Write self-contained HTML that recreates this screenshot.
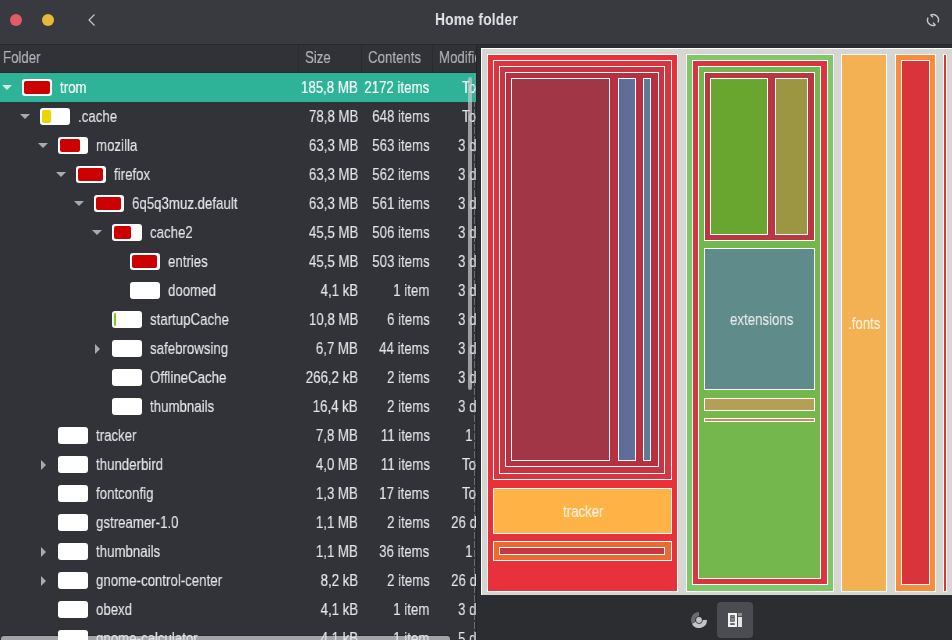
<!DOCTYPE html>
<html><head><meta charset="utf-8"><style>
html,body{margin:0;padding:0}
body{width:952px;height:640px;position:relative;overflow:hidden;background:#323338;font-family:"Liberation Sans",sans-serif}
.t{position:absolute;white-space:nowrap;line-height:1;-webkit-text-stroke:0.15px currentColor;will-change:transform}
.r{position:absolute;box-sizing:border-box;border:1px solid #fff}
</style></head><body>
<div style="position:absolute;left:0;top:0;width:952px;height:44px;background:#393a40"></div>
<div style="position:absolute;left:0;top:44px;width:952px;height:1px;background:#27282c"></div>
<div style="position:absolute;left:10px;top:14px;width:12px;height:12px;border-radius:50%;background:#e25b68"></div>
<div style="position:absolute;left:42px;top:14px;width:12px;height:12px;border-radius:50%;background:#e9b838"></div>
<svg style="position:absolute;left:86px;top:12px" width="12" height="16" viewBox="0 0 12 16"><path d="M8.5 2.5 L3 8 L8.5 13.5" fill="none" stroke="#cfcfd1" stroke-width="1.1"/></svg>
<div class="t" style="left:435.2px;top:10.6px;font-size:17px;color:#e6e6e7;transform:scaleX(0.81);transform-origin:0 0;font-weight:bold;-webkit-text-stroke:0;letter-spacing:0.3px;">Home folder</div>
<svg style="position:absolute;left:925px;top:12px" width="16" height="16" viewBox="0 0 16 16"><path d="M7.9 5.4 L5.85 2.94 A5.5 5.5 0 0 1 12.94 10.41" fill="none" stroke="#c9c9cb" stroke-width="1.4" stroke-linejoin="round"/><path d="M8.1 10.6 L10.15 13.06 A5.5 5.5 0 0 1 3.06 5.59" fill="none" stroke="#c9c9cb" stroke-width="1.4" stroke-linejoin="round"/></svg>
<div style="position:absolute;left:0;top:45px;width:476px;height:595px;background:#323338"></div>
<div style="position:absolute;left:0;top:45px;width:476px;height:27px;background:#313237"></div>
<div style="position:absolute;left:0;top:72px;width:476px;height:1px;background:#2a2b2f"></div>
<div style="position:absolute;left:298px;top:45px;width:1px;height:27px;background:#2a2b2f"></div>
<div style="position:absolute;left:361px;top:45px;width:1px;height:27px;background:#2a2b2f"></div>
<div style="position:absolute;left:432px;top:45px;width:1px;height:27px;background:#2a2b2f"></div>
<div class="t" style="left:2.5px;top:48.6px;font-size:17px;color:#b4b4b6;transform:scaleX(0.78);transform-origin:0 0;">Folder</div>
<div class="t" style="left:305px;top:48.6px;font-size:17px;color:#b4b4b6;transform:scaleX(0.78);transform-origin:0 0;">Size</div>
<div class="t" style="left:368px;top:48.6px;font-size:17px;color:#b4b4b6;transform:scaleX(0.78);transform-origin:0 0;">Contents</div>
<div class="t" style="left:439px;top:48.6px;font-size:17px;color:#b4b4b6;transform:scaleX(0.78);transform-origin:0 0;">Modified</div>
<div style="position:absolute;left:0;top:73px;width:476px;height:567px;overflow:hidden">
<div style="position:absolute;left:1px;top:562px;width:449px;height:1px;background:rgba(0,0,0,.18)"></div>
<div style="position:absolute;left:1px;top:563px;width:449px;height:6px;border-radius:3px;background:#a4a4a6"></div>
<div style="position:absolute;left:0;top:0px;width:476px;height:29px;background:#2fb398"></div>
<svg style="position:absolute;left:2px;top:12px" width="10" height="5" viewBox="0 0 10 5"><path d="M0 0 H10 L5 5 Z" fill="#cfeee6"/></svg>
<div style="position:absolute;left:22px;top:6px;width:30px;height:17px;border-radius:3px;background:#fff"></div>
<div style="position:absolute;left:24px;top:8px;width:26px;height:13px;border-radius:2px;background:#cc0000"></div>
<div class="t" style="left:59.5px;top:5.6px;font-size:17px;color:#ffffff;transform:scaleX(0.78);transform-origin:0 0;">trom</div>
<div class="t" style="right:118px;top:5.6px;font-size:17px;color:#ffffff;transform:scaleX(0.78);transform-origin:100% 0;">185,8 MB</div>
<div class="t" style="right:46.5px;top:5.6px;font-size:17px;color:#ffffff;transform:scaleX(0.78);transform-origin:100% 0;">2172 items</div>
<div style="position:absolute;left:440px;top:0px;width:36px;height:29px;overflow:hidden"><div class="t" style="right:-21.5px;top:5.6px;font-size:17px;color:#ffffff;transform:scaleX(0.78);transform-origin:100% 0;">Today</div></div>
<svg style="position:absolute;left:20px;top:41px" width="10" height="5" viewBox="0 0 10 5"><path d="M0 0 H10 L5 5 Z" fill="#a9aaad"/></svg>
<div style="position:absolute;left:40px;top:35px;width:30px;height:17px;border-radius:3px;background:#fff"></div>
<div style="position:absolute;left:42px;top:37px;width:9px;height:13px;border-radius:2px;background:#edd400"></div>
<div class="t" style="left:77.5px;top:34.6px;font-size:17px;color:#e4e4e5;transform:scaleX(0.78);transform-origin:0 0;">.cache</div>
<div class="t" style="right:118px;top:34.6px;font-size:17px;color:#e4e4e5;transform:scaleX(0.78);transform-origin:100% 0;">78,8 MB</div>
<div class="t" style="right:46.5px;top:34.6px;font-size:17px;color:#e4e4e5;transform:scaleX(0.78);transform-origin:100% 0;">648 items</div>
<div style="position:absolute;left:440px;top:29px;width:36px;height:29px;overflow:hidden"><div class="t" style="right:-21.5px;top:5.6px;font-size:17px;color:#e4e4e5;transform:scaleX(0.78);transform-origin:100% 0;">Today</div></div>
<svg style="position:absolute;left:38px;top:70px" width="10" height="5" viewBox="0 0 10 5"><path d="M0 0 H10 L5 5 Z" fill="#a9aaad"/></svg>
<div style="position:absolute;left:58px;top:64px;width:30px;height:17px;border-radius:3px;background:#fff"></div>
<div style="position:absolute;left:60px;top:66px;width:20px;height:13px;border-radius:2px;background:#cc0000"></div>
<div class="t" style="left:95.5px;top:63.6px;font-size:17px;color:#e4e4e5;transform:scaleX(0.78);transform-origin:0 0;">mozilla</div>
<div class="t" style="right:118px;top:63.6px;font-size:17px;color:#e4e4e5;transform:scaleX(0.78);transform-origin:100% 0;">63,3 MB</div>
<div class="t" style="right:46.5px;top:63.6px;font-size:17px;color:#e4e4e5;transform:scaleX(0.78);transform-origin:100% 0;">563 items</div>
<div style="position:absolute;left:440px;top:58px;width:36px;height:29px;overflow:hidden"><div class="t" style="right:-21.5px;top:5.6px;font-size:17px;color:#e4e4e5;transform:scaleX(0.78);transform-origin:100% 0;">3 days</div></div>
<svg style="position:absolute;left:56px;top:99px" width="10" height="5" viewBox="0 0 10 5"><path d="M0 0 H10 L5 5 Z" fill="#a9aaad"/></svg>
<div style="position:absolute;left:76px;top:93px;width:30px;height:17px;border-radius:3px;background:#fff"></div>
<div style="position:absolute;left:78px;top:95px;width:25px;height:13px;border-radius:2px;background:#cc0000"></div>
<div class="t" style="left:113.5px;top:92.6px;font-size:17px;color:#e4e4e5;transform:scaleX(0.78);transform-origin:0 0;">firefox</div>
<div class="t" style="right:118px;top:92.6px;font-size:17px;color:#e4e4e5;transform:scaleX(0.78);transform-origin:100% 0;">63,3 MB</div>
<div class="t" style="right:46.5px;top:92.6px;font-size:17px;color:#e4e4e5;transform:scaleX(0.78);transform-origin:100% 0;">562 items</div>
<div style="position:absolute;left:440px;top:87px;width:36px;height:29px;overflow:hidden"><div class="t" style="right:-21.5px;top:5.6px;font-size:17px;color:#e4e4e5;transform:scaleX(0.78);transform-origin:100% 0;">3 days</div></div>
<svg style="position:absolute;left:74px;top:128px" width="10" height="5" viewBox="0 0 10 5"><path d="M0 0 H10 L5 5 Z" fill="#a9aaad"/></svg>
<div style="position:absolute;left:94px;top:122px;width:30px;height:17px;border-radius:3px;background:#fff"></div>
<div style="position:absolute;left:96px;top:124px;width:25px;height:13px;border-radius:2px;background:#cc0000"></div>
<div class="t" style="left:131.5px;top:121.6px;font-size:17px;color:#e4e4e5;transform:scaleX(0.78);transform-origin:0 0;">6q5q3muz.default</div>
<div class="t" style="right:118px;top:121.6px;font-size:17px;color:#e4e4e5;transform:scaleX(0.78);transform-origin:100% 0;">63,3 MB</div>
<div class="t" style="right:46.5px;top:121.6px;font-size:17px;color:#e4e4e5;transform:scaleX(0.78);transform-origin:100% 0;">561 items</div>
<div style="position:absolute;left:440px;top:116px;width:36px;height:29px;overflow:hidden"><div class="t" style="right:-21.5px;top:5.6px;font-size:17px;color:#e4e4e5;transform:scaleX(0.78);transform-origin:100% 0;">3 days</div></div>
<svg style="position:absolute;left:92px;top:157px" width="10" height="5" viewBox="0 0 10 5"><path d="M0 0 H10 L5 5 Z" fill="#a9aaad"/></svg>
<div style="position:absolute;left:112px;top:151px;width:30px;height:17px;border-radius:3px;background:#fff"></div>
<div style="position:absolute;left:114px;top:153px;width:17px;height:13px;border-radius:2px;background:#cc0000"></div>
<div class="t" style="left:149.5px;top:150.6px;font-size:17px;color:#e4e4e5;transform:scaleX(0.78);transform-origin:0 0;">cache2</div>
<div class="t" style="right:118px;top:150.6px;font-size:17px;color:#e4e4e5;transform:scaleX(0.78);transform-origin:100% 0;">45,5 MB</div>
<div class="t" style="right:46.5px;top:150.6px;font-size:17px;color:#e4e4e5;transform:scaleX(0.78);transform-origin:100% 0;">506 items</div>
<div style="position:absolute;left:440px;top:145px;width:36px;height:29px;overflow:hidden"><div class="t" style="right:-21.5px;top:5.6px;font-size:17px;color:#e4e4e5;transform:scaleX(0.78);transform-origin:100% 0;">3 days</div></div>
<div style="position:absolute;left:130px;top:180px;width:30px;height:17px;border-radius:3px;background:#fff"></div>
<div style="position:absolute;left:132px;top:182px;width:25px;height:13px;border-radius:2px;background:#cc0000"></div>
<div class="t" style="left:167.5px;top:179.6px;font-size:17px;color:#e4e4e5;transform:scaleX(0.78);transform-origin:0 0;">entries</div>
<div class="t" style="right:118px;top:179.6px;font-size:17px;color:#e4e4e5;transform:scaleX(0.78);transform-origin:100% 0;">45,5 MB</div>
<div class="t" style="right:46.5px;top:179.6px;font-size:17px;color:#e4e4e5;transform:scaleX(0.78);transform-origin:100% 0;">503 items</div>
<div style="position:absolute;left:440px;top:174px;width:36px;height:29px;overflow:hidden"><div class="t" style="right:-21.5px;top:5.6px;font-size:17px;color:#e4e4e5;transform:scaleX(0.78);transform-origin:100% 0;">3 days</div></div>
<div style="position:absolute;left:130px;top:209px;width:30px;height:17px;border-radius:3px;background:#fff"></div>
<div class="t" style="left:167.5px;top:208.6px;font-size:17px;color:#e4e4e5;transform:scaleX(0.78);transform-origin:0 0;">doomed</div>
<div class="t" style="right:118px;top:208.6px;font-size:17px;color:#e4e4e5;transform:scaleX(0.78);transform-origin:100% 0;">4,1 kB</div>
<div class="t" style="right:46.5px;top:208.6px;font-size:17px;color:#e4e4e5;transform:scaleX(0.78);transform-origin:100% 0;">1 item</div>
<div style="position:absolute;left:440px;top:203px;width:36px;height:29px;overflow:hidden"><div class="t" style="right:-21.5px;top:5.6px;font-size:17px;color:#e4e4e5;transform:scaleX(0.78);transform-origin:100% 0;">3 days</div></div>
<div style="position:absolute;left:112px;top:238px;width:30px;height:17px;border-radius:3px;background:#fff"></div>
<div style="position:absolute;left:114px;top:240px;width:2px;height:13px;border-radius:2px;background:#73d216"></div>
<div class="t" style="left:149.5px;top:237.6px;font-size:17px;color:#e4e4e5;transform:scaleX(0.78);transform-origin:0 0;">startupCache</div>
<div class="t" style="right:118px;top:237.6px;font-size:17px;color:#e4e4e5;transform:scaleX(0.78);transform-origin:100% 0;">10,8 MB</div>
<div class="t" style="right:46.5px;top:237.6px;font-size:17px;color:#e4e4e5;transform:scaleX(0.78);transform-origin:100% 0;">6 items</div>
<div style="position:absolute;left:440px;top:232px;width:36px;height:29px;overflow:hidden"><div class="t" style="right:-21.5px;top:5.6px;font-size:17px;color:#e4e4e5;transform:scaleX(0.78);transform-origin:100% 0;">3 days</div></div>
<svg style="position:absolute;left:95px;top:271px" width="5" height="10" viewBox="0 0 5 10"><path d="M0 0 V10 L5 5 Z" fill="#a9aaad"/></svg>
<div style="position:absolute;left:112px;top:267px;width:30px;height:17px;border-radius:3px;background:#fff"></div>
<div class="t" style="left:149.5px;top:266.6px;font-size:17px;color:#e4e4e5;transform:scaleX(0.78);transform-origin:0 0;">safebrowsing</div>
<div class="t" style="right:118px;top:266.6px;font-size:17px;color:#e4e4e5;transform:scaleX(0.78);transform-origin:100% 0;">6,7 MB</div>
<div class="t" style="right:46.5px;top:266.6px;font-size:17px;color:#e4e4e5;transform:scaleX(0.78);transform-origin:100% 0;">44 items</div>
<div style="position:absolute;left:440px;top:261px;width:36px;height:29px;overflow:hidden"><div class="t" style="right:-21.5px;top:5.6px;font-size:17px;color:#e4e4e5;transform:scaleX(0.78);transform-origin:100% 0;">3 days</div></div>
<div style="position:absolute;left:112px;top:296px;width:30px;height:17px;border-radius:3px;background:#fff"></div>
<div class="t" style="left:149.5px;top:295.6px;font-size:17px;color:#e4e4e5;transform:scaleX(0.78);transform-origin:0 0;">OfflineCache</div>
<div class="t" style="right:118px;top:295.6px;font-size:17px;color:#e4e4e5;transform:scaleX(0.78);transform-origin:100% 0;">266,2 kB</div>
<div class="t" style="right:46.5px;top:295.6px;font-size:17px;color:#e4e4e5;transform:scaleX(0.78);transform-origin:100% 0;">2 items</div>
<div style="position:absolute;left:440px;top:290px;width:36px;height:29px;overflow:hidden"><div class="t" style="right:-21.5px;top:5.6px;font-size:17px;color:#e4e4e5;transform:scaleX(0.78);transform-origin:100% 0;">3 days</div></div>
<div style="position:absolute;left:112px;top:325px;width:30px;height:17px;border-radius:3px;background:#fff"></div>
<div class="t" style="left:149.5px;top:324.6px;font-size:17px;color:#e4e4e5;transform:scaleX(0.78);transform-origin:0 0;">thumbnails</div>
<div class="t" style="right:118px;top:324.6px;font-size:17px;color:#e4e4e5;transform:scaleX(0.78);transform-origin:100% 0;">16,4 kB</div>
<div class="t" style="right:46.5px;top:324.6px;font-size:17px;color:#e4e4e5;transform:scaleX(0.78);transform-origin:100% 0;">2 items</div>
<div style="position:absolute;left:440px;top:319px;width:36px;height:29px;overflow:hidden"><div class="t" style="right:-21.5px;top:5.6px;font-size:17px;color:#e4e4e5;transform:scaleX(0.78);transform-origin:100% 0;">3 days</div></div>
<div style="position:absolute;left:58px;top:354px;width:30px;height:17px;border-radius:3px;background:#fff"></div>
<div class="t" style="left:95.5px;top:353.6px;font-size:17px;color:#e4e4e5;transform:scaleX(0.78);transform-origin:0 0;">tracker</div>
<div class="t" style="right:118px;top:353.6px;font-size:17px;color:#e4e4e5;transform:scaleX(0.78);transform-origin:100% 0;">7,8 MB</div>
<div class="t" style="right:46.5px;top:353.6px;font-size:17px;color:#e4e4e5;transform:scaleX(0.78);transform-origin:100% 0;">11 items</div>
<div style="position:absolute;left:440px;top:348px;width:36px;height:29px;overflow:hidden"><div class="t" style="right:-21.5px;top:5.6px;font-size:17px;color:#e4e4e5;transform:scaleX(0.78);transform-origin:100% 0;">1 day</div></div>
<svg style="position:absolute;left:41px;top:387px" width="5" height="10" viewBox="0 0 5 10"><path d="M0 0 V10 L5 5 Z" fill="#a9aaad"/></svg>
<div style="position:absolute;left:58px;top:383px;width:30px;height:17px;border-radius:3px;background:#fff"></div>
<div class="t" style="left:95.5px;top:382.6px;font-size:17px;color:#e4e4e5;transform:scaleX(0.78);transform-origin:0 0;">thunderbird</div>
<div class="t" style="right:118px;top:382.6px;font-size:17px;color:#e4e4e5;transform:scaleX(0.78);transform-origin:100% 0;">4,0 MB</div>
<div class="t" style="right:46.5px;top:382.6px;font-size:17px;color:#e4e4e5;transform:scaleX(0.78);transform-origin:100% 0;">11 items</div>
<div style="position:absolute;left:440px;top:377px;width:36px;height:29px;overflow:hidden"><div class="t" style="right:-21.5px;top:5.6px;font-size:17px;color:#e4e4e5;transform:scaleX(0.78);transform-origin:100% 0;">Today</div></div>
<div style="position:absolute;left:58px;top:412px;width:30px;height:17px;border-radius:3px;background:#fff"></div>
<div class="t" style="left:95.5px;top:411.6px;font-size:17px;color:#e4e4e5;transform:scaleX(0.78);transform-origin:0 0;">fontconfig</div>
<div class="t" style="right:118px;top:411.6px;font-size:17px;color:#e4e4e5;transform:scaleX(0.78);transform-origin:100% 0;">1,3 MB</div>
<div class="t" style="right:46.5px;top:411.6px;font-size:17px;color:#e4e4e5;transform:scaleX(0.78);transform-origin:100% 0;">17 items</div>
<div style="position:absolute;left:440px;top:406px;width:36px;height:29px;overflow:hidden"><div class="t" style="right:-21.5px;top:5.6px;font-size:17px;color:#e4e4e5;transform:scaleX(0.78);transform-origin:100% 0;">Today</div></div>
<div style="position:absolute;left:58px;top:441px;width:30px;height:17px;border-radius:3px;background:#fff"></div>
<div class="t" style="left:95.5px;top:440.6px;font-size:17px;color:#e4e4e5;transform:scaleX(0.78);transform-origin:0 0;">gstreamer-1.0</div>
<div class="t" style="right:118px;top:440.6px;font-size:17px;color:#e4e4e5;transform:scaleX(0.78);transform-origin:100% 0;">1,1 MB</div>
<div class="t" style="right:46.5px;top:440.6px;font-size:17px;color:#e4e4e5;transform:scaleX(0.78);transform-origin:100% 0;">2 items</div>
<div style="position:absolute;left:440px;top:435px;width:36px;height:29px;overflow:hidden"><div class="t" style="right:-21.5px;top:5.6px;font-size:17px;color:#e4e4e5;transform:scaleX(0.78);transform-origin:100% 0;">26 days</div></div>
<svg style="position:absolute;left:41px;top:474px" width="5" height="10" viewBox="0 0 5 10"><path d="M0 0 V10 L5 5 Z" fill="#a9aaad"/></svg>
<div style="position:absolute;left:58px;top:470px;width:30px;height:17px;border-radius:3px;background:#fff"></div>
<div class="t" style="left:95.5px;top:469.6px;font-size:17px;color:#e4e4e5;transform:scaleX(0.78);transform-origin:0 0;">thumbnails</div>
<div class="t" style="right:118px;top:469.6px;font-size:17px;color:#e4e4e5;transform:scaleX(0.78);transform-origin:100% 0;">1,1 MB</div>
<div class="t" style="right:46.5px;top:469.6px;font-size:17px;color:#e4e4e5;transform:scaleX(0.78);transform-origin:100% 0;">36 items</div>
<div style="position:absolute;left:440px;top:464px;width:36px;height:29px;overflow:hidden"><div class="t" style="right:-21.5px;top:5.6px;font-size:17px;color:#e4e4e5;transform:scaleX(0.78);transform-origin:100% 0;">1 day</div></div>
<svg style="position:absolute;left:41px;top:503px" width="5" height="10" viewBox="0 0 5 10"><path d="M0 0 V10 L5 5 Z" fill="#a9aaad"/></svg>
<div style="position:absolute;left:58px;top:499px;width:30px;height:17px;border-radius:3px;background:#fff"></div>
<div class="t" style="left:95.5px;top:498.6px;font-size:17px;color:#e4e4e5;transform:scaleX(0.78);transform-origin:0 0;">gnome-control-center</div>
<div class="t" style="right:118px;top:498.6px;font-size:17px;color:#e4e4e5;transform:scaleX(0.78);transform-origin:100% 0;">8,2 kB</div>
<div class="t" style="right:46.5px;top:498.6px;font-size:17px;color:#e4e4e5;transform:scaleX(0.78);transform-origin:100% 0;">2 items</div>
<div style="position:absolute;left:440px;top:493px;width:36px;height:29px;overflow:hidden"><div class="t" style="right:-21.5px;top:5.6px;font-size:17px;color:#e4e4e5;transform:scaleX(0.78);transform-origin:100% 0;">26 days</div></div>
<div style="position:absolute;left:58px;top:528px;width:30px;height:17px;border-radius:3px;background:#fff"></div>
<div class="t" style="left:95.5px;top:527.6px;font-size:17px;color:#e4e4e5;transform:scaleX(0.78);transform-origin:0 0;">obexd</div>
<div class="t" style="right:118px;top:527.6px;font-size:17px;color:#e4e4e5;transform:scaleX(0.78);transform-origin:100% 0;">4,1 kB</div>
<div class="t" style="right:46.5px;top:527.6px;font-size:17px;color:#e4e4e5;transform:scaleX(0.78);transform-origin:100% 0;">1 item</div>
<div style="position:absolute;left:440px;top:522px;width:36px;height:29px;overflow:hidden"><div class="t" style="right:-21.5px;top:5.6px;font-size:17px;color:#e4e4e5;transform:scaleX(0.78);transform-origin:100% 0;">3 days</div></div>
<div style="position:absolute;left:58px;top:557px;width:30px;height:17px;border-radius:3px;background:#fff"></div>
<div class="t" style="left:95.5px;top:556.6px;font-size:17px;color:#e4e4e5;transform:scaleX(0.78);transform-origin:0 0;">gnome-calculator</div>
<div class="t" style="right:118px;top:556.6px;font-size:17px;color:#e4e4e5;transform:scaleX(0.78);transform-origin:100% 0;">4,1 kB</div>
<div class="t" style="right:46.5px;top:556.6px;font-size:17px;color:#e4e4e5;transform:scaleX(0.78);transform-origin:100% 0;">1 item</div>
<div style="position:absolute;left:440px;top:551px;width:36px;height:29px;overflow:hidden"><div class="t" style="right:-21.5px;top:5.6px;font-size:17px;color:#e4e4e5;transform:scaleX(0.78);transform-origin:100% 0;">5 days</div></div>
</div>
<div style="position:absolute;left:474px;top:73px;width:1px;height:567px;background:repeating-linear-gradient(180deg,rgba(150,150,155,.55) 0 7px,transparent 7px 9px)"></div>
<div style="position:absolute;left:468px;top:77px;width:4px;height:313px;border-radius:2px;background:rgba(200,200,202,.72)"></div>
<div style="position:absolute;left:476px;top:45px;width:1px;height:595px;background:#25262a"></div>
<div style="position:absolute;left:477px;top:45px;width:475px;height:595px;background:#2c2d31"></div>
<div class="r" style="left:481px;top:48px;width:480px;height:547px;background:#d5d6d1"></div>
<div style="position:absolute;left:482px;top:594px;width:470px;height:1px;background:#d5d6d1"></div>
<div class="r" style="left:487px;top:54px;width:191px;height:538px;background:#e8313a"></div>
<div class="r" style="left:493px;top:60px;width:179px;height:420px;background:#d9353f"></div>
<div class="r" style="left:499px;top:66px;width:166px;height:408px;background:#c83442"></div>
<div class="r" style="left:505px;top:72px;width:154px;height:395px;background:#b5313f"></div>
<div class="r" style="left:511px;top:78px;width:99px;height:383px;background:#a13746"></div>
<div class="r" style="left:618px;top:78px;width:18px;height:383px;background:#5f6e99"></div>
<div class="r" style="left:643px;top:78px;width:8px;height:383px;background:#5c7d94"></div>
<div class="r" style="left:493px;top:488px;width:179px;height:46px;background:#ffb347"></div>
<div class="r" style="left:493px;top:541px;width:179px;height:20px;background:#ea6a2f"></div>
<div class="r" style="left:499px;top:547px;width:166px;height:8px;background:#c73843"></div>
<div class="r" style="left:686px;top:54px;width:148px;height:538px;background:#7ec86a"></div>
<div class="r" style="left:692px;top:60px;width:136px;height:525px;background:#d9343f"></div>
<div class="r" style="left:698px;top:66px;width:123px;height:513px;background:#74b84d"></div>
<div class="r" style="left:704px;top:72px;width:111px;height:169px;background:#bb3644"></div>
<div class="r" style="left:710px;top:78px;width:58px;height:157px;background:#69a630"></div>
<div class="r" style="left:775px;top:78px;width:33px;height:157px;background:#9c9643"></div>
<div class="r" style="left:704px;top:248px;width:111px;height:142px;background:#5f8b8a"></div>
<div class="r" style="left:704px;top:398px;width:111px;height:13px;background:#b39f55"></div>
<div class="r" style="left:704px;top:418px;width:111px;height:4px;background:#c08f5a"></div>
<div class="r" style="left:841px;top:54px;width:46px;height:538px;background:#f3b153"></div>
<div class="r" style="left:895px;top:54px;width:41px;height:538px;background:#f98b39"></div>
<div class="r" style="left:901px;top:60px;width:29px;height:525px;background:#d9343c"></div>
<div class="r" style="left:943px;top:54px;width:4px;height:538px;background:#e8302c"></div>
<div class="t" style="left:563px;top:502.6px;font-size:17px;color:rgba(255,255,255,.82);transform:scaleX(0.78);transform-origin:0 0;">tracker</div>
<div class="t" style="left:729.5px;top:310.6px;font-size:17px;color:rgba(255,255,255,.82);transform:scaleX(0.78);transform-origin:0 0;">extensions</div>
<div class="t" style="left:847.5px;top:314.6px;font-size:17px;color:rgba(255,255,255,.82);transform:scaleX(0.78);transform-origin:0 0;">.fonts</div>
<div style="position:absolute;left:477px;top:595px;width:475px;height:45px;background:#2c2d31"></div>
<div style="position:absolute;left:717px;top:602px;width:36px;height:36px;border-radius:4px;background:#4b4c51"></div>
<svg style="position:absolute;left:691px;top:612px" width="16" height="16" viewBox="0 0 16 16"><path d="M16 8 A8 8 0 0 1 0.936 11.756 L4.689 9.76 A3.75 3.75 0 0 0 11.75 8 Z" fill="#c4c4c6"/><path d="M0.936 11.756 A8 8 0 0 1 8 0 L8 4.25 A3.75 3.75 0 0 0 4.689 9.76 Z" fill="#6b6c70"/><circle cx="8" cy="8" r="2.9" fill="#c4c4c6"/></svg>
<svg style="position:absolute;left:728px;top:613px" width="15" height="14" viewBox="0 0 15 14"><rect x="0" y="0" width="9" height="14" fill="#f2f2f2"/><rect x="2.2" y="2.2" width="4.5" height="6.5" fill="#46474b"/><rect x="3.1" y="3.1" width="2.8" height="0.9" fill="#8e8f92"/><rect x="3.1" y="4.8" width="2.8" height="3.0" fill="#8e8f92"/><rect x="2.2" y="10.3" width="4.5" height="1.5" fill="#3c3d41"/><rect x="10" y="0" width="4" height="2.9" fill="#8e8f92"/><rect x="10" y="4" width="4" height="10" fill="#e6e6e6"/></svg>
</body></html>
